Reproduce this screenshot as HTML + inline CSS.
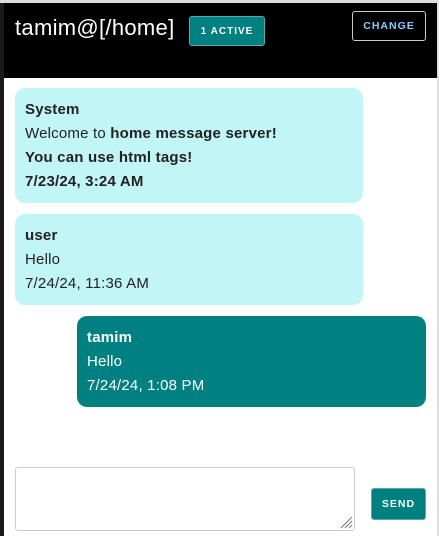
<!DOCTYPE html>
<html><head><style>
body{margin:0;width:439px;height:536px;overflow:hidden;background:#fff;font-family:"Liberation Sans",sans-serif;position:relative}
.left{position:absolute;left:0;top:0;width:4px;height:536px;background:#1a1a1a}
.topl{position:absolute;left:0;top:0;width:439px;height:3px;background:#ddd}
.hdr{position:absolute;left:4px;top:3px;width:433px;height:75px;background:#000}
.rb{position:absolute;right:0;top:0;width:2px;height:536px;background:#e0e0e0}
.title{position:absolute;left:15px;top:15px;color:#fff;font-size:22px;letter-spacing:0.3px}
.badge{position:absolute;left:189px;top:16px;width:76px;height:30px;background:#008080;border:1px solid #5aa;border-radius:3px;color:#fff;font-size:10px;font-weight:bold;letter-spacing:1px;line-height:30px;text-align:center;box-sizing:border-box}
.chg{position:absolute;left:352px;top:11px;width:74px;height:30px;border:1px solid #ccc;border-radius:3px;color:#8cf;font-size:10.5px;font-weight:bold;letter-spacing:1px;line-height:28px;text-align:center;box-sizing:border-box}
.b{position:absolute;border-radius:10px;padding:10px 10px;box-sizing:border-box;font-size:15px;line-height:24px;color:#222;letter-spacing:0.2px}
.l{background:#c2f5f5;left:15px;width:348px}
.r{background:#008080;color:#fff;left:77px;width:349px}
.ta{position:absolute;left:15px;top:467px;width:340px;height:64px;border:1px solid #ccc;border-radius:3px;box-sizing:border-box}
.send{position:absolute;left:371px;top:488px;width:55px;height:32px;background:#008080;border:1px solid #5aa;border-radius:3px;color:#fff;font-size:10.5px;font-weight:bold;letter-spacing:1px;line-height:30px;text-align:center;box-sizing:border-box}
</style></head><body>
<div class="left"></div><div class="topl"></div><div class="hdr"></div><div class="rb"></div>
<div class="title">tamim@[/home]</div>
<div class="badge">1 ACTIVE</div>
<div class="chg">CHANGE</div>
<div class="b l" style="top:88px;height:115px"><b>System</b><br>Welcome to <b>home message server!</b><br><b>You can use html tags!</b><br><b>7/23/24, 3:24 AM</b></div>
<div class="b l" style="top:214px;height:91px"><b>user</b><br>Hello<br>7/24/24, 11:36 AM</div>
<div class="b r" style="top:316px;height:91px"><b>tamim</b><br>Hello<br>7/24/24, 1:08 PM</div>
<div class="ta"><svg style="position:absolute;right:1px;bottom:1px" width="14" height="14"><path d="M13 2L2 13M13 6L6 13M13 10L10 13" stroke="#777" stroke-width="1"/></svg></div>
<div class="send">SEND</div>
</body></html>
